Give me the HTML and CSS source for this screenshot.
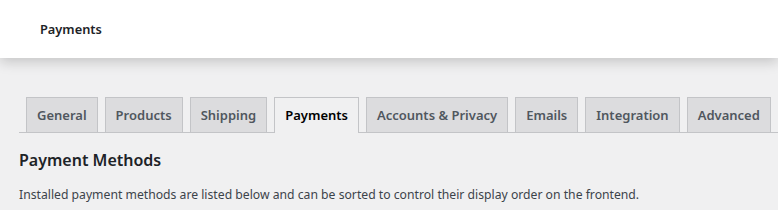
FILE: index.html
```html
<!DOCTYPE html>
<html lang="en">
<head>
  <meta charset="UTF-8">
  <title>Payments</title>
  <link rel="stylesheet" href="styles.css">
</head>
<body>
  <header class="topbar">
    <h1>Payments</h1>
  </header>

  <div class="wrap">
    <nav class="nav-tabs">
      <a href="#" class="nav-tab">General</a>
      <a href="#" class="nav-tab">Products</a>
      <a href="#" class="nav-tab">Shipping</a>
      <a href="#" class="nav-tab active">Payments</a>
      <a href="#" class="nav-tab">Accounts &amp; Privacy</a>
      <a href="#" class="nav-tab">Emails</a>
      <a href="#" class="nav-tab">Integration</a>
      <a href="#" class="nav-tab">Advanced</a>
    </nav>

    <h2>Payment Methods</h2>
    <p>Installed payment methods are listed below and can be sorted to control their display order on the frontend.</p>
  </div>
</body>
</html>
```

FILE: styles.css
```css
body {
  margin: 0;
  background: #f0f0f1;
  color: #3c434a;
  font-family: "Noto Sans", Arial, sans-serif;
  font-size: 12.2px;
  overflow: hidden;
}
.topbar {
  background: #fff;
  height: 58px;
  padding: 0 40px;
  display: flex;
  align-items: center;
  box-shadow: 0 4px 12px rgba(0, 0, 0, 0.18);
}
.topbar h1 {
  margin: 0;
  font-size: 12.8px;
  font-weight: 600;
  color: #1d2327;
}
.wrap { padding: 0 0 0 19px; }
.nav-tabs {
  display: flex;
  margin-top: 39px;
  border-bottom: 1px solid #c3c4c7;
}
.nav-tab {
  margin-left: 7px;
  padding: 5px 10px;
  border: 1px solid #c3c4c7;
  border-bottom: none;
  background: #dcdcde;
  color: #50575e;
  font-size: 13px;
  font-weight: 600;
  line-height: 24px;
  text-decoration: none;
  white-space: nowrap;
}
.nav-tab.active {
  background: #f0f0f1;
  color: #000;
  margin-bottom: -1px;
  padding-bottom: 6px;
}
h2 {
  margin: 16px 0 0;
  font-size: 16px;
  font-weight: 600;
  color: #1d2327;
}
p { margin: 15px 0 0; }
```
